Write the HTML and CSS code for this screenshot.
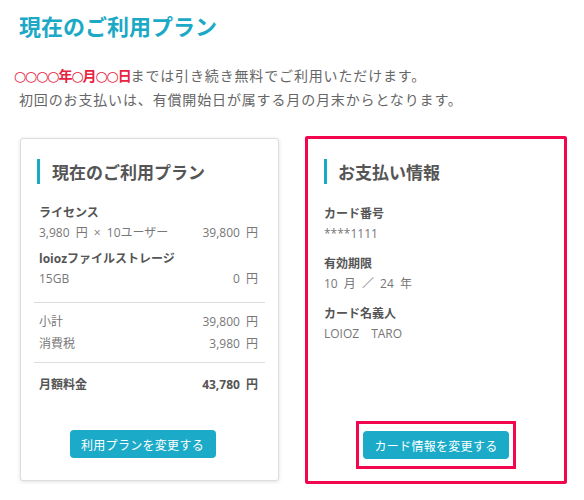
FILE: index.html
```html
<!DOCTYPE html>
<html lang="ja">
<head>
    <meta charset="UTF-8">
    <meta name="viewport" content="width=device-width, initial-scale=1.0">
    <title>現在のご利用プラン</title>
    <link rel="stylesheet" href="styles.css">
</head>
<body>
    <div class="page">
        <h1 class="page-title">現在のご利用プラン</h1>

        <p class="notice">
            <span class="notice-date">○○○○<b>年</b>○<b>月</b>○○<b>日</b></span>までは引き続き無料でご利用いただけます。<br>
            <span class="notice-second">初回のお支払いは、有償開始日が属する月の月末からとなります。</span>
        </p>

        <div class="cards">
            <!-- current plan -->
            <div class="card card-plan">
                <h2 class="card-title">現在のご利用プラン</h2>

                <div class="rows">
                    <div class="row-label">ライセンス</div>
                    <div class="row">
                        <span>3,980 円 × 10ユーザー</span>
                        <span>39,800 円</span>
                    </div>
                    <div class="row-label group">loiozファイルストレージ</div>
                    <div class="row">
                        <span>15GB</span>
                        <span>0 円</span>
                    </div>
                </div>

                <div class="rows rows-sub">
                    <div class="row">
                        <span>小計</span>
                        <span>39,800 円</span>
                    </div>
                    <div class="row">
                        <span>消費税</span>
                        <span>3,980 円</span>
                    </div>
                </div>

                <div class="rows rows-total">
                    <div class="row">
                        <span>月額料金</span>
                        <span>43,780 円</span>
                    </div>
                </div>

                <div class="card-actions plan-actions">
                    <button class="btn">利用プランを変更する</button>
                </div>
            </div>

            <!-- payment info -->
            <div class="card card-pay">
                <h2 class="card-title">お支払い情報</h2>

                <dl class="pay-info">
                    <dt>カード番号</dt>
                    <dd>****1111</dd>
                    <dt>有効期限</dt>
                    <dd>10 月 ／ 24 年</dd>
                    <dt>カード名義人</dt>
                    <dd>LOIOZ　TARO</dd>
                </dl>

                <div class="card-actions pay-actions">
                    <span class="mark">
                        <button class="btn">カード情報を変更する</button>
                    </span>
                </div>
            </div>
        </div>
    </div>
</body>
</html>
```

FILE: styles.css
```css
body {
    margin: 0;
    font-family: "Open Sans", "Noto Sans CJK JP", sans-serif;
    color: #666;
    background-color: white;
}
.page {
    padding: 8px 16px 0 14px;
}
.page-title {
    margin: 0 0 0 5px;
    font-family: "Noto Sans CJK JP", sans-serif;
    font-size: 22px;
    line-height: 34px;
    color: #1ba9c6;
    font-weight: bold;
}
.notice {
    margin: 22px 0 0;
    font-family: "Noto Sans CJK JP", sans-serif;
    font-size: 14px;
    line-height: 23px;
    letter-spacing: 0.85px;
    color: #666;
}
.notice-date {
    font-family: "DejaVu Sans", "Noto Sans CJK JP", sans-serif;
    letter-spacing: -1.1px;
    color: #e8233f;
}
.notice-second {
    padding-left: 5px;
}
.cards {
    display: grid;
    grid-template-columns: 259px 262px;
    grid-auto-rows: 348px;
    column-gap: 26px;
    margin: 25px 0 0 6px;
}
.card {
    display: flex;
    flex-direction: column;
    background-color: white;
    border-radius: 3px;
    padding: 0 13px;
}
.card-plan {
    border: 1px solid #ddd;
    box-shadow: 0 1px 4px rgba(0,0,0,0.12);
    margin: 2px 0 3px;
}
.card-pay {
    border: 3px solid #f2074f;
    border-radius: 2px;
}
.card-title {
    margin: 20px 0 19px 3px;
    padding-left: 12px;
    border-left: 3px solid #1ba9c6;
    font-family: "Noto Sans CJK JP", sans-serif;
    font-size: 17px;
    line-height: 25px;
    color: #555;
}
.card-pay .card-title {
    padding-left: 11px;
}
.rows {
    padding: 0 7px 0 5px;
    font-size: 12px;
    line-height: 20px;
    word-spacing: 3px;
    color: #777;
}
.row {
    display: flex;
    justify-content: space-between;
}
.row-label {
    font-weight: bold;
    word-spacing: 0;
    color: #555;
}
.row-label.group {
    margin-top: 6px;
}
.rows-sub {
    border-top: 1px solid #ddd;
    margin-top: 13px;
    padding-top: 8px;
    padding-bottom: 7px;
    line-height: 22px;
}
.rows-total {
    border-top: 1px solid #ddd;
    padding-top: 11px;
    line-height: 22px;
    font-weight: bold;
    color: #555;
}
.pay-info {
    margin: 1px 0 0 3px;
    font-size: 12px;
    line-height: 20px;
    word-spacing: 3px;
}
.pay-info dt {
    font-weight: bold;
    color: #555;
}
.pay-info dd {
    margin: 0 0 10px;
    color: #777;
}
.card-actions {
    margin-top: auto;
    text-align: center;
}
.plan-actions {
    padding-right: 14px;
    margin-bottom: 22px;
}
.pay-actions {
    margin-bottom: 12px;
}
.mark {
    display: inline-block;
    padding: 7px 4px;
    border: 3px solid #f2074f;
}
.btn {
    display: block;
    width: 146px;
    height: 28px;
    padding: 0;
    border: none;
    border-radius: 4px;
    background-color: #1babc8;
    color: white;
    font-family: "Noto Sans CJK JP", sans-serif;
    font-size: 12px;
    letter-spacing: 0.3px;
    cursor: pointer;
}
.btn:hover {
    background-color: #1795ae;
}
.plan-actions .btn {
    margin: 0 auto;
}
```
